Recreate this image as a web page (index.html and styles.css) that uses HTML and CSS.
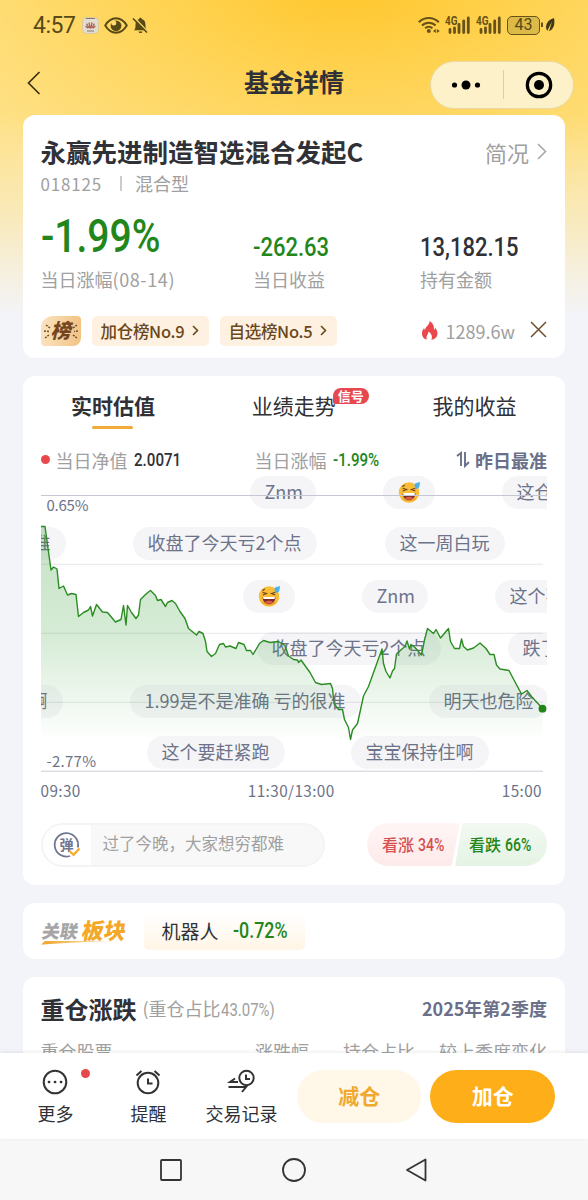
FILE: index.html
```html
<!DOCTYPE html>
<html lang="zh-CN">

<head>
    <meta charset="UTF-8">
    <meta name="viewport" content="width=device-width, initial-scale=1.0">
    <title>基金详情</title>
    <link rel="stylesheet" href="styles.css">
</head>

<body>
    <div class="phone">
        <div class="screen">
            <!-- status bar -->
            <div class="status">
                <span class="clock">4:57</span>
                <svg class="ic-app" width="17" height="17" viewBox="0 0 17 17">
                    <rect x="0.5" y="0.5" width="16" height="16" rx="4" fill="#e3dcd0" stroke="#cfc09a" stroke-width="0.6"/>
                    <path d="M4 1.5h9M5 14h7" stroke="#77706a" stroke-width="0.9"/>
                    <path d="M8.2 11.5L7 5.5M8.8 11.5L10 5.5M7 11L4.6 6.6M10 11l2.4-4.4M6 11.2L3.6 9M11 11.2L13.4 9" stroke="#ad6258" stroke-width="1.3"/>
                </svg>
                <svg class="ic-eye" width="24" height="17" viewBox="0 0 24 17">
                    <path d="M1.2 8.5C4 3.8 7.800 1.300 12 1.300s8 2.500 10.800 7.200c-2.800 4.700-6.600 7.200-10.800 7.200S4 13.200 1.200 8.500z" fill="none" stroke="#574a16" stroke-width="1.900"/>
                    <circle cx="12" cy="8.800" r="5.400" fill="#574a16"/>
                    <circle cx="9.800" cy="6" r="2.500" fill="#ffdb70"/>
                </svg>
                <svg class="ic-bell" width="17" height="18" viewBox="0 0 17 18">
                    <path d="M2 14.200c1.500-1.200 1.500-3 1.500-5.500 0-3.200 1.500-5 3.700-5.600C7.200 1.200 9.700 1.200 9.700 3.100c2.300.6 3.800 2.400 3.800 5.600 0 2.500.2 4.300 1.500 5.500z" fill="#574a16"/>
                    <path d="M6.500 15.400h4c-.3 2.300-3.700 2.300-4 0z" fill="#574a16"/>
                    <path d="M2.200 1.500l13.800 14.500" stroke="#ffdb70" stroke-width="1.500"/>
                    <path d="M1 2.500l14 14" stroke="#574a16" stroke-width="1.700"/>
                </svg>
                <div class="status-right">
                    <svg width="22" height="18" viewBox="0 0 22 18" fill="none" stroke="#68521a" stroke-width="2.100">
                        <path d="M0.800 6.200a14 14 0 0 1 20 0M4 9.500a9.600 9.600 0 0 1 13.600 0M7.200 12.300a5.200 5.200 0 0 1 7.200 0"/>
                        <circle cx="10.800" cy="15" r="2" fill="#68521a" stroke="none"/>
                        <path d="M17.800 13v4L15 15zM18.800 13v4l3-2z" fill="#68521a" stroke="none"/>
                    </svg>
                    <svg class="ic-sig" width="26" height="18" viewBox="0 0 26 18">
                        <text class="sig-label" x="0" y="9" textLength="12.500" lengthAdjust="spacingAndGlyphs">4G</text>
                        <path d="M5 13.500v3M9.500 12v4.500M14 8.500v8M18.700 5v11.500M23.300 2v14.500" stroke="#68521a" stroke-width="2.800" stroke-linecap="round"/>
                    </svg>
                    <svg class="ic-sig" width="26" height="18" viewBox="0 0 26 18">
                        <text class="sig-label" x="0" y="9" textLength="12.500" lengthAdjust="spacingAndGlyphs">4G</text>
                        <path d="M5 13.500v3M9.500 12v4.500M14 8.500v8M18.700 5v11.500M23.300 2v14.500" stroke="#68521a" stroke-width="2.800" stroke-linecap="round"/>
                    </svg>
                    <div class="battery">43</div>
                    <svg width="14" height="16" viewBox="0 0 14 16">
                        <path d="M1 5.500v4.500" stroke="#68521a" stroke-width="2"/>
                        <path d="M13 1C8 2.500 4.500 6 5.200 11.500l1 2.500L11 4.500 8 14.200C13.500 12 14 6 13 1z" fill="#3f3a16"/>
                    </svg>
                </div>
            </div>

            <!-- title bar -->
            <div class="header">
                <svg class="back" width="14" height="24" viewBox="0 0 14 24" fill="none" stroke="#3b3215" stroke-width="1.700">
                    <path d="M12.500 1L1.500 12l11 11"/>
                </svg>
                <h1 class="page-title">基金详情</h1>
                <div class="capsule">
                    <svg width="30" height="10" viewBox="0 0 30 10">
                        <circle cx="3.500" cy="5" r="2.600"/><circle cx="15" cy="5" r="4.500"/><circle cx="26.500" cy="5" r="2.600"/>
                    </svg>
                    <span class="capsule-line"></span>
                    <svg width="28" height="28" viewBox="0 0 28 28">
                        <circle cx="14" cy="14" r="11.700" fill="none" stroke="#000" stroke-width="3.200"/><circle cx="14" cy="14" r="5"/>
                    </svg>
                </div>
            </div>

            <div class="cards">
                <!-- fund summary -->
                <section class="card summary">
                    <div class="fund-head">
                        <h2 class="fund-name">永赢先进制造智选混合发起C</h2>
                        <span class="brief">简况
                            <svg width="10" height="17" viewBox="0 0 10 17" fill="none" stroke="#a8a8a8" stroke-width="1.600"><path d="M1 1l7.500 7.500L1 16"/></svg>
                        </span>
                    </div>
                    <div class="fund-code"><span class="code">018125</span><i class="sep"></i><span>混合型</span></div>
                    <div class="figures">
                        <div><p class="num big green">-1.99%</p><p class="label">当日涨幅<span class="date">(08-14)</span></p></div>
                        <div><p class="num mid green">-262.63</p><p class="label">当日收益</p></div>
                        <div><p class="num mid">13,182.15</p><p class="label">持有金额</p></div>
                    </div>
                    <div class="ranks">
                        <span class="rank-badge">
                            <svg width="40" height="30" viewBox="0 0 40 30">
                                <path d="M5 9l4 3M3 15l5 .5M4 22l4-3M36 9l-4 3M37 15l-4 .5M36 22l-4-3" stroke="#75502a" stroke-width="1.500" stroke-dasharray="2 1"/>
                                <text class="rank-char" x="9.500" y="22">榜</text>
                            </svg>
                        </span>
                        <span class="chip">加仓榜No.9<svg width="7" height="11" viewBox="0 0 7 11"><path d="M1 1l4.500 4.500L1 10"/></svg></span>
                        <span class="chip">自选榜No.5<svg width="7" height="11" viewBox="0 0 7 11"><path d="M1 1l4.500 4.500L1 10"/></svg></span>
                        <span class="hot">
                            <svg width="16" height="19" viewBox="0 0 16 19"><path d="M7.500 0C8 4 3.500 5.200 3 9 2.500 8.600 2.200 8 2.200 7 .8 8.500 0 10.500 0 12.500 0 16 2.300 18.200 5 18.600 3.500 15.500 6 14 6.500 10.500c2.500 1.500 4.500 5 2.800 8.200 3.500-.3 6.200-2.700 6.200-6.500 0-2.200-1.200-4.200-2.400-5.500 0 1-.4 1.800-1.100 2.300C12.300 5 10.800 1.500 7.500 0z" fill="#e9474c"/></svg>
                            1289.6w
                        </span>
                        <svg class="close" width="17" height="17" viewBox="0 0 17 17" stroke="#70502c" stroke-width="1.500"><path d="M1 1l15 15M16 1L1 16"/></svg>
                    </div>
                </section>

                <!-- estimate chart -->
                <section class="card chart-card">
                    <nav class="tabs">
                        <a class="tab active">实时估值</a>
                        <a class="tab">业绩走势<b class="signal">信号</b></a>
                        <a class="tab">我的收益</a>
                    </nav>
                    <div class="legend">
                        <i class="dot"></i><span class="grey">当日净值</span><span class="num small">2.0071</span>
                        <span class="grey legend-rise">当日涨幅</span><span class="num small green">-1.99%</span>
                        <span class="accurate">
                            <svg width="14" height="17" viewBox="0 0 14 17" fill="none" stroke="#6a7089" stroke-width="1.900"><path d="M1 5l4-3v13M9 1v14l4-4"/></svg>
                            昨日最准
                        </span>
                    </div>
                    <div class="chart">
                        <span class="bubble r1 b1">Znm</span>
                        <span class="bubble r1 b2"><svg class="emoji" viewBox="0 0 20 20"><use href="#sweat"/></svg></span>
                        <span class="bubble r1 b3">这仓位</span>
                        <span class="bubble r2 b4">准</span>
                        <span class="bubble r2 b5">收盘了今天亏2个点</span>
                        <span class="bubble r2 b6">这一周白玩</span>
                        <span class="bubble r3 b7"><svg class="emoji" viewBox="0 0 20 20"><use href="#sweat"/></svg></span>
                        <span class="bubble r3 b8">Znm</span>
                        <span class="bubble r3 b9">这个不</span>
                        <span class="bubble r4 b10">收盘了今天亏2个点</span>
                        <span class="bubble r4 b11">跌了</span>
                        <span class="bubble r5 b12">啊</span>
                        <span class="bubble r5 b13">1.99是不是准确 亏的很准</span>
                        <span class="bubble r5 b14">明天也危险</span>
                        <span class="bubble r6 b15">这个要赶紧跑</span>
                        <span class="bubble r6 b16">宝宝保持住啊</span>
                        <svg class="plot" width="507" height="300" viewBox="41 476 507 300">
                            <defs>
                                <linearGradient id="fall" gradientUnits="userSpaceOnUse" x1="0" y1="526" x2="0" y2="737">
                                    <stop offset="0" stop-color="#2c9a2c" stop-opacity="0.280"/>
                                    <stop offset="0.500" stop-color="#2c9a2c" stop-opacity="0.200"/>
                                    <stop offset="1" stop-color="#2c9a2c" stop-opacity="0.010"/>
                                </linearGradient>
                                <g id="sweat">
                                    <circle cx="10" cy="10.500" r="9.300" fill="#fbbd35"/>
                                    <path d="M2.500 14.500a9.300 9.300 0 0 0 15 0c-2 3-13 3-15 0z" fill="#e8952e"/>
                                    <path d="M4.200 10.800h11.600c0 4-2.300 6.200-5.800 6.200s-5.800-2.200-5.800-6.200z" fill="#7a2c28"/>
                                    <path d="M4.600 10.800h10.800l-.4 2H5z" fill="#fff"/>
                                    <path d="M6.500 15.500c1.500-1.700 5.500-1.700 7 0-2 1.800-5 1.800-7 0z" fill="#e25a4c"/>
                                    <path d="M4.200 6.500l3.600 1.300-3.600 1.200M15.800 6.500l-3.600 1.300 3.600 1.200M4 5.200l2.200-1.500" stroke="#6d4322" stroke-width="1" fill="none"/>
                                    <path d="M15 3.800c0-2 3.200-2.300 5-2.800-.2 2.300-.3 6-2.800 6-1.400 0-2.200-1.200-2.200-3.200z" fill="#4fb0e4"/>
                                </g>
                            </defs>
                            <path d="M41 495.500h507" stroke="#c3c8d4" stroke-width="1"/>
                            <path d="M41 564.300h502M41 633.300h502M41 702.300h502" stroke="#73788a" stroke-opacity="0.140" stroke-width="1.200"/>
                            <path d="M41 771.300h502" stroke="#dddee3" stroke-width="1.500"/>
                            <path fill="url(#fall)" d="M41 526.500H45L51 570 53.500 567 57 569 59 588.500 63.500 586 67.500 595 71.500 593.500 76 594.500 78.500 616.500 83.500 612.500 88.500 610 90.500 606.500 92.500 616 96.500 604.500 102.500 612 107.500 612.500 115.500 622 121 619.500 123.500 605.500 126 625 127.500 605.500 131.500 612.500 136 618.500 138.500 615 140.500 599.500 146 594 150.500 590.500 155.500 595.500 157.500 600.500 161 599.500 165.500 606.500 167.500 602.500 172 600.500 175.500 603.500 180 611.500 185 618.500 188.500 628.500 196.500 635 199 631.500 203 633.500 205.500 641.500 207 651.500 211.500 656.500 215.500 653.500 219.500 644.500 223.500 643.500 225.500 647 230 646 236 648.500 238.500 642.500 244 644.500 246.500 650.500 250.500 650.500 253 654.500 259.500 643.500 263.500 640.500 270 642.500 278.500 641.500 285 645.500 288.500 656 293.500 659.500 297.500 660 298.500 662.500 301 660 310 672.500 315.500 682.500 321.500 684.500 330.500 683.500 332.500 688.500 334 703.500 338.500 709.500 342.500 709.500 344.500 719.500 348.500 727.500 350.500 739.500 352.500 730 357.500 723.500 363.500 696 368.500 686.500 377.500 661.500 382 649 383.500 663.500 386 671.500 390 678 392.500 671 394.500 668.500 396.500 654 402.500 648.500 405 646.500 407 641 409.500 649 411 644.500 415 647.500 421.500 655 424.500 640 427.500 628.500 433.500 633.500 436 629.500 440.500 638 448.500 628.500 450.500 641.500 454.500 648.500 459.500 648.500 461.500 639 463.500 646.500 467.500 650 473.500 648 480 643 486 648.500 490 654.500 494 654.500 496.500 665 500 669 509 670.500 514.500 681 521.500 694 527 690.500 531.500 696.500 542.500 708.500V737H41z"/>
                            <path class="trend" d="M41 526.500H45L51 570 53.500 567 57 569 59 588.500 63.500 586 67.500 595 71.500 593.500 76 594.500 78.500 616.500 83.500 612.500 88.500 610 90.500 606.500 92.500 616 96.500 604.500 102.500 612 107.500 612.500 115.500 622 121 619.500 123.500 605.500 126 625 127.500 605.500 131.500 612.500 136 618.500 138.500 615 140.500 599.500 146 594 150.500 590.500 155.500 595.500 157.500 600.500 161 599.500 165.500 606.500 167.500 602.500 172 600.500 175.500 603.500 180 611.500 185 618.500 188.500 628.500 196.500 635 199 631.500 203 633.500 205.500 641.500 207 651.500 211.500 656.500 215.500 653.500 219.500 644.500 223.500 643.500 225.500 647 230 646 236 648.500 238.500 642.500 244 644.500 246.500 650.500 250.500 650.500 253 654.500 259.500 643.500 263.500 640.500 270 642.500 278.500 641.500 285 645.500 288.500 656 293.500 659.500 297.500 660 298.500 662.500 301 660 310 672.500 315.500 682.500 321.500 684.500 330.500 683.500 332.500 688.500 334 703.500 338.500 709.500 342.500 709.500 344.500 719.500 348.500 727.500 350.500 739.500 352.500 730 357.500 723.500 363.500 696 368.500 686.500 377.500 661.500 382 649 383.500 663.500 386 671.500 390 678 392.500 671 394.500 668.500 396.500 654 402.500 648.500 405 646.500 407 641 409.500 649 411 644.500 415 647.500 421.500 655 424.500 640 427.500 628.500 433.500 633.500 436 629.500 440.500 638 448.500 628.500 450.500 641.500 454.500 648.500 459.500 648.500 461.500 639 463.500 646.500 467.500 650 473.500 648 480 643 486 648.500 490 654.500 494 654.500 496.500 665 500 669 509 670.500 514.500 681 521.500 694 527 690.500 531.500 696.500 542.500 708.500"/>
                            <circle cx="542.500" cy="708.700" r="3.900" fill="#23861b"/>
                            <text class="axis" x="46.500" y="511" textLength="42">0.65%</text>
                            <text class="axis" x="46.500" y="767" textLength="49.500">-2.77%</text>
                        </svg>
                    </div>
                    <div class="times"><span>09:30</span><span>11:30/13:00</span><span>15:00</span></div>
                    <div class="talk">
                        <div class="input">
                            <span class="input-icon">
                                <svg width="28" height="28" viewBox="0 0 28 28" fill="none">
                                    <path d="M24.800 16.500A11.700 11.700 0 1 0 17 25" stroke="#6f7691" stroke-width="1.800"/>
                                    <text class="dan" x="6.500" y="18.500">弹</text>
                                    <path d="M16.500 20l4 3.800 6-6.300" stroke="#f5ac2c" stroke-width="2.300"/>
                                </svg>
                            </span>
                            <span class="placeholder">过了今晚，大家想穷都难</span>
                        </div>
                        <div class="votes">
                            <svg class="vote-bg" width="180" height="43" viewBox="0 0 180 43">
                                <defs>
                                    <linearGradient id="up" x2="0" y2="1"><stop stop-color="#fff5f5"/><stop offset="1" stop-color="#fdeaea"/></linearGradient>
                                    <linearGradient id="down" x2="0" y2="1"><stop stop-color="#f2f9f2"/><stop offset="1" stop-color="#e4f3e4"/></linearGradient>
                                </defs>
                                <path d="M21.500 0H91q2 0 1.600 2L85 41q-.4 2-2.400 2H21.500a21.500 21.500 0 0 1 0-43z" fill="url(#up)"/>
                                <path d="M97.500 0h61a21.500 21.500 0 0 1 0 43H90q-2 0-1.600-2L95 2q.5-2 2.500-2z" fill="url(#down)"/>
                            </svg>
                            <span class="vote up">看涨<b class="num">34%</b></span>
                            <span class="vote down">看跌<b class="num">66%</b></span>
                        </div>
                    </div>
                </section>

                <!-- related sector -->
                <section class="card related">
                    <svg width="88" height="32" viewBox="0 0 88 32">
                        <defs><linearGradient id="swoosh"><stop stop-color="#f0a52c"/><stop offset="1" stop-color="#fff3df"/></linearGradient></defs>
                        <path d="M0 29.500l4-3.500h82q-38 0-84 3.500z" fill="url(#swoosh)"/>
                        <g transform="skewX(-10)">
                            <text class="rel-a" x="4" y="23">关联</text>
                            <text class="rel-b" x="44" y="24">板块</text>
                        </g>
                    </svg>
                    <div class="sector"><span class="sector-name">机器人</span><span class="num green">-0.72%</span></div>
                </section>

                <!-- heavy holdings -->
                <section class="card holdings">
                    <div class="hold-head">
                        <h3 class="hold-title">重仓涨跌</h3>
                        <span class="hold-ratio">(重仓占比<span class="ratio-num">43.07%)</span></span>
                        <span class="quarter">2025年第2季度</span>
                    </div>
                    <div class="hold-cols"><span>重仓股票</span><span>涨跌幅</span><span>持仓占比</span><span>较上季度变化</span></div>
                </section>
            </div>
        </div>

        <!-- action bar -->
        <div class="actions">
            <a class="act">
                <svg width="28" height="28" viewBox="0 0 28 28" fill="none" stroke="#333" stroke-width="2">
                    <circle cx="14" cy="14" r="11.300"/>
                    <path d="M8 14h.1M14 14h.1M20 14h.1" stroke-width="2.700" stroke-linecap="round"/>
                </svg>
                更多<i class="red-dot"></i>
            </a>
            <a class="act">
                <svg width="28" height="28" viewBox="0 0 28 28" fill="none" stroke="#333" stroke-width="2">
                    <circle cx="14" cy="15" r="10.300"/>
                    <path d="M14 10.500V15.500h4.500M2.500 7.500l5-4.500M25.500 7.500l-5-4.500"/>
                </svg>
                提醒
            </a>
            <a class="act">
                <svg width="30" height="28" viewBox="0 0 30 28" fill="none" stroke="#333" stroke-width="2">
                    <circle cx="20.500" cy="10" r="7.200"/>
                    <path d="M20 6.500V11h4M9 10.500l-5 3.500h8M2.500 19h17.500l-4 5"/>
                </svg>
                交易记录
            </a>
            <button class="btn reduce">减仓</button>
            <button class="btn add">加仓</button>
        </div>

        <!-- system navigation -->
        <div class="sysnav">
            <svg width="24" height="24" viewBox="0 0 24 24"><rect x="2" y="2" width="20" height="20" rx="1"/></svg>
            <svg width="24" height="24" viewBox="0 0 24 24"><circle cx="12" cy="12" r="11"/></svg>
            <svg width="24" height="24" viewBox="0 0 24 24"><path d="M20.500 1.500v21L2 12z"/></svg>
        </div>
    </div>
</body>

</html>
```
FILE: styles.css
```css
* {
    margin: 0;
    padding: 0;
    box-sizing: border-box;
}

body {
    font-family: "Noto Sans CJK SC", "Noto Sans", sans-serif;
    color: #303136;
}

svg {
    display: block;
    flex: none;
}

.phone {
    width: 588px;
    height: 1200px;
    display: flex;
    flex-direction: column;
    overflow: hidden;
}

.screen {
    height: 1053px;
    overflow: hidden;
    background-color: #f3f4f9;
    background-image: linear-gradient(to bottom, rgba(243, 244, 249, 0) 0, rgba(243, 244, 249, 0.05) 115px, rgba(243, 244, 249, 0.5) 220px, #f3f4f9 315px),
        radial-gradient(ellipse 420px 260px at 350px -20px, #ffc62b 0, #ffd352 45%, #ffe080 100%);
}

/* status bar */
.status {
    height: 50px;
    display: flex;
    align-items: center;
    padding: 0 33px;
    color: #574a16;
}

.clock {
    width: 49px;
    font-family: Roboto, sans-serif;
    font-size: 23px;
    letter-spacing: -0.5px;
}

.ic-eye {
    margin-left: 5px;
}

.ic-bell {
    margin-left: 4px;
}

.status-right {
    display: flex;
    align-items: center;
    gap: 5px;
    margin-left: auto;
}

.sig-label {
    font-family: Roboto, sans-serif;
    font-size: 12px;
    font-weight: bold;
    fill: #68521a;
}

.battery {
    width: 33px;
    height: 19px;
    border: 1.5px solid #68521a;
    border-radius: 5px;
    background: #dcba48;
    font: 16px/16px Roboto, sans-serif;
    text-align: center;
    margin-right: -4px;
}

/* title bar */
.header {
    height: 65px;
    display: grid;
    grid-template-columns: 160px 1fr 160px;
    align-items: center;
    padding: 0 14px 0 27px;
}

.page-title {
    padding: 0 13px 4px 0;
    font-size: 25px;
    line-height: 32px;
    text-align: center;
}

.capsule {
    justify-self: end;
    width: 144px;
    height: 48px;
    margin-top: 4px;
    display: flex;
    align-items: center;
    justify-content: space-between;
    padding: 0 20px;
    border: 1px solid #ead9a3;
    border-radius: 24px;
    background: #fdf1ca;
}

.capsule-line {
    width: 1px;
    height: 29px;
    background: #dccf9f;
}

/* cards */
.cards {
    display: flex;
    flex-direction: column;
    gap: 18px;
    padding: 0 23px 0 22.500px;
}

.card {
    flex: none;
    padding: 0 18px;
    border-radius: 12px;
    background: #fff;
}

.num {
    font-family: Roboto, sans-serif;
    font-weight: 500;
    transform-origin: left center;
}

.green {
    color: #23861b;
}

.summary {
    height: 243px;
    padding-top: 17px;
}

.fund-head {
    display: flex;
    justify-content: space-between;
    align-items: center;
    height: 38px;
}

.fund-name {
    font-size: 25.500px;
    line-height: 38px;
}

.brief {
    display: flex;
    align-items: center;
    gap: 8px;
    padding-top: 1px;
    font-size: 22px;
    color: #a0a0a0;
}

.fund-code {
    display: flex;
    align-items: center;
    height: 26px;
    font-size: 18px;
    color: #a0a0a0;
}

.code {
    font-size: 17px;
    letter-spacing: 0.8px;
}

.sep {
    width: 2px;
    height: 15px;
    margin: 0 13px 0 18px;
    background: #ccc;
}

.figures {
    display: grid;
    grid-template-columns: 212.500px 167px 1fr;
    align-items: end;
    height: 98px;
}

.big {
    font-size: 46.500px;
    line-height: 56px;
    transform: scaleX(0.840);
}

.mid {
    font-size: 25px;
    line-height: 32px;
    transform: scaleX(0.880);
}

.label {
    font-size: 18px;
    line-height: 30px;
    color: #a0a0a0;
}

.date {
    letter-spacing: 0.6px;
}

.ranks {
    display: flex;
    align-items: center;
    height: 30px;
    margin-top: 22px;
}

.rank-badge {
    border-radius: 12px 4px 8px 4px;
    background: linear-gradient(90deg, #fae3be, #f2c384);
}

.rank-char {
    font-size: 20px;
    font-weight: 900;
    font-style: italic;
    fill: #73451f;
}

.chip {
    display: flex;
    align-items: center;
    gap: 8px;
    width: 117px;
    height: 30px;
    margin-left: 11px;
    padding: 0 0 1px 9px;
    border-radius: 5px;
    background: #fff1e1;
    color: #6b4719;
    font-size: 16.500px;
    font-weight: 500;
    letter-spacing: -0.3px;
    white-space: nowrap;
}

.chip svg {
    fill: none;
    stroke: #6b4719;
    stroke-width: 1.600;
}

.hot {
    display: flex;
    align-items: center;
    gap: 8px;
    margin-left: auto;
    padding-bottom: 1px;
    font-size: 18px;
    color: #a0a0a0;
}

.close {
    margin: 0 0 3px 15px;
}

/* chart card */
.chart-card {
    height: 509px;
}

.tabs {
    display: grid;
    grid-template-columns: repeat(3, 1fr);
    margin: 0 -18px;
    height: 69px;
}

.tab {
    position: relative;
    justify-self: center;
    height: 58px;
    font-size: 21px;
    line-height: 58px;
}

.active {
    font-weight: bold;
}

.active::after {
    content: "";
    position: absolute;
    left: 21px;
    top: 50px;
    width: 41px;
    height: 3px;
    border-radius: 2px;
    background: #f0ab38;
}

.signal {
    position: absolute;
    left: 81px;
    top: 12px;
    width: 36px;
    height: 16px;
    border-radius: 8px 8px 8px 2px;
    background: #e6484d;
    color: #fff;
    font-size: 13px;
    line-height: 15px;
    text-align: center;
}

.legend {
    display: flex;
    align-items: center;
    height: 31px;
    padding-bottom: 2px;
}

.dot {
    width: 9px;
    height: 9px;
    margin-right: 6px;
    border-radius: 50%;
    background: #e9474c;
}

.grey {
    font-size: 18px;
    color: #a0a0a0;
}

.small {
    width: 48px;
    margin-left: 6px;
    font-size: 18px;
    transform: scaleX(0.840);
}

.legend-rise {
    margin-left: 73px;
}

.accurate {
    display: flex;
    align-items: center;
    gap: 5px;
    margin-left: auto;
    font-size: 18px;
    font-weight: bold;
    color: #6a7089;
    white-space: nowrap;
}

.chart {
    position: relative;
    height: 300px;
    overflow: hidden;
}

.plot {
    position: relative;
}

.trend {
    fill: none;
    stroke: #2a8c22;
    stroke-width: 1.400;
    stroke-linejoin: round;
}

.axis {
    font-size: 15px;
    fill: #6d7389;
}

.bubble {
    position: absolute;
    height: 33px;
    padding: 0 15px;
    border-radius: 17px;
    background: #f5f5f8;
    color: #6d7389;
    font-size: 18px;
    line-height: 31px;
    white-space: nowrap;
}

.emoji {
    width: 22px;
    height: 22px;
    margin-top: 5px;
}

.r1 { top: 0; }
.r2 { top: 51px; }
.r3 { top: 104px; }
.r4 { top: 156px; }
.r5 { top: 209px; }
.r6 { top: 260px; }

.b1 { left: 209px; width: 66px; }
.b2 { left: 342px; }
.b3 { left: 461px; }
.b4 { left: -23px; }
.b5 { left: 92px; }
.b6 { left: 344px; }
.b7 { left: 202px; }
.b8 { left: 321px; width: 66px; }
.b9 { left: 454px; }
.b10 { left: 216px; }
.b11 { left: 467px; }
.b12 { left: -26px; }
.b13 { left: 89px; }
.b14 { left: 388px; }
.b15 { left: 106px; }
.b16 { left: 310px; }

.times {
    display: flex;
    justify-content: space-between;
    height: 31px;
    padding-right: 5px;
    font-size: 15.300px;
    line-height: 29px;
    letter-spacing: 0.400px;
    color: #6d7389;
}

.talk {
    display: flex;
    justify-content: space-between;
    margin-top: 16px;
}

.input {
    display: flex;
    width: 284px;
    height: 44px;
    border: 2px solid #f4f4f4;
    border-radius: 22px;
    background: #f8f8f8;
    overflow: hidden;
}

.input-icon {
    width: 48px;
    padding: 6px 0 0 10px;
    background: #fff;
}

.dan {
    font-size: 14px;
    font-weight: bold;
    fill: #6f7691;
}

.placeholder {
    padding-left: 12px;
    font-size: 16.500px;
    line-height: 37px;
    color: #a0a0a0;
}

.votes {
    display: grid;
    grid-template-columns: 92px 88px;
    height: 43px;
}

.vote-bg {
    grid-area: 1 / 1 / 2 / 3;
}

.vote {
    grid-row: 1;
    display: flex;
    align-items: center;
    gap: 4px;
    padding-left: 15px;
    padding-bottom: 1px;
    font-size: 16px;
    font-weight: 500;
    white-space: nowrap;
}

.vote .num {
    font-size: 18px;
    transform: scaleX(0.780);
}

.up {
    grid-column: 1;
    color: #d5504f;
}

.down {
    grid-column: 2;
    padding-left: 10px;
    color: #23861b;
}

/* related sector */
.related {
    display: flex;
    align-items: center;
    gap: 15px;
    height: 56px;
}

.rel-a {
    font-size: 18px;
    font-weight: 900;
    fill: #a5a5a5;
}

.rel-b {
    font-size: 22px;
    font-weight: 900;
    fill: #f3a82a;
}

.sector {
    display: flex;
    align-items: center;
    width: 161px;
    height: 37px;
    padding: 0 0 2px 18px;
    border-radius: 5px;
    background: linear-gradient(#fff, #fff5e5);
    font-size: 19px;
    white-space: nowrap;
}

.sector .num {
    margin-left: 14px;
    font-size: 22px;
    transform: scaleX(0.810);
}

/* holdings */
.holdings {
    height: 200px;
}

.hold-head {
    display: flex;
    align-items: center;
    height: 62px;
}

.hold-title {
    font-size: 24px;
}

.hold-ratio {
    margin-left: 6px;
    font-size: 18px;
    color: #a0a0a0;
    white-space: nowrap;
}

.ratio-num {
    display: inline-block;
    font-family: Roboto, sans-serif;
    transform: scaleX(0.830);
    transform-origin: left center;
}

.quarter {
    margin-left: auto;
    font-size: 18px;
    font-weight: bold;
    color: #6a7089;
}

.hold-cols {
    display: grid;
    grid-template-columns: 1fr 54px 106px 132px;
    text-align: right;
    font-size: 18px;
    line-height: 24px;
    color: #a0a0a0;
}

.hold-cols span:first-child {
    text-align: left;
}

/* action bar */
.actions {
    height: 86px;
    display: flex;
    align-items: center;
    padding: 0 33px 0 9px;
    background: #fff;
    box-shadow: 0 -1px 4px rgba(0, 0, 0, 0.08);
    z-index: 1;
}

.act {
    position: relative;
    width: 93.300px;
    height: 72px;
    display: flex;
    flex-direction: column;
    align-items: center;
    gap: 2px;
    padding-top: 8px;
    font-size: 18px;
    line-height: 30px;
}

.red-dot {
    position: absolute;
    left: 72px;
    top: 9px;
    width: 9px;
    height: 9px;
    border-radius: 50%;
    background: #e6484d;
}

.btn {
    width: 125px;
    height: 53px;
    margin-left: 9px;
    padding-bottom: 3px;
    border: none;
    border-radius: 27px;
    font-family: inherit;
    font-size: 21px;
    font-weight: bold;
}

.reduce {
    background: #fff7e7;
    color: #f0a92e;
}

.add {
    background: #fdae18;
    color: #fff;
}

/* system navigation */
.sysnav {
    height: 61px;
    display: flex;
    align-items: center;
    justify-content: center;
    gap: 99px;
    background: #f7f7f7;
}

.sysnav svg {
    fill: none;
    stroke: #333;
    stroke-width: 1.800;
    stroke-linejoin: round;
}
```
